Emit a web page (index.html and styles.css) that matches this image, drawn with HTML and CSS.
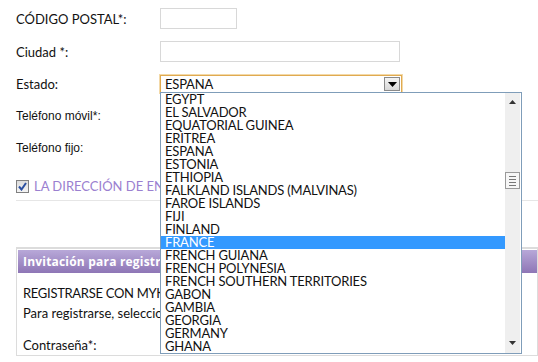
FILE: index.html
```html
<!DOCTYPE html>
<html lang="es">
<head>
    <meta charset="UTF-8">
    <title>Dirección</title>
    <link rel="stylesheet" href="styles.css">
</head>
<body>
    <div class="page">
        <div class="form-row row-tall">
            <label>CÓDIGO POSTAL*:</label>
            <div class="field field-short"></div>
        </div>
        <div class="form-row row-tall">
            <label>Ciudad *:</label>
            <div class="field field-long"></div>
        </div>
        <div class="form-row">
            <label>Estado:</label>
            <div class="select-wrap">
                <div class="select">
                    <span>ESPANA</span>
                    <span class="select-btn">
                        <svg width="9" height="5" viewBox="0 0 9 5"><path d="M0 0H9L4.5 5Z" fill="#000"/></svg>
                    </span>
                </div>
                <ul class="dropdown">
                    <li>EGYPT</li>
                    <li>EL SALVADOR</li>
                    <li>EQUATORIAL GUINEA</li>
                    <li>ERITREA</li>
                    <li>ESPANA</li>
                    <li>ESTONIA</li>
                    <li>ETHIOPIA</li>
                    <li>FALKLAND ISLANDS (MALVINAS)</li>
                    <li>FAROE ISLANDS</li>
                    <li>FIJI</li>
                    <li>FINLAND</li>
                    <li class="selected">FRANCE</li>
                    <li>FRENCH GUIANA</li>
                    <li>FRENCH POLYNESIA</li>
                    <li>FRENCH SOUTHERN TERRITORIES</li>
                    <li>GABON</li>
                    <li>GAMBIA</li>
                    <li>GEORGIA</li>
                    <li>GERMANY</li>
                    <li>GHANA</li>
                </ul>
                <div class="scrollbar">
                    <svg class="arrow-up" width="7" height="4" viewBox="0 0 7 4"><path d="M3.5 0L7 4H0Z" fill="#333"/></svg>
                    <div class="thumb"><i></i><i></i><i></i><i></i></div>
                    <svg class="arrow-down" width="7" height="4" viewBox="0 0 7 4"><path d="M0 0H7L3.5 4Z" fill="#333"/></svg>
                </div>
            </div>
        </div>
        <div class="form-row">
            <label class="plain">Teléfono móvil*:</label>
        </div>
        <div class="form-row">
            <label class="plain">Teléfono fijo:</label>
        </div>

        <div class="check-row">
            <span class="checkbox">
                <svg width="9" height="9" viewBox="0 0 9 9"><path d="M1 4.5L3.5 7.5L8 1" stroke="#2a4fa0" stroke-width="2" fill="none"/></svg>
            </span>
            <span class="check-label">LA DIRECCIÓN DE ENVÍO ES LA MISMA</span>
        </div>
        <hr class="divider">

        <div class="box">
            <div class="box-header">Invitación para registrarse en MyKiko</div>
            <p class="box-line first">REGISTRARSE CON MYKIKO</p>
            <p class="box-line">Para registrarse, seleccione una contraseña</p>
            <p class="box-line pass">Contraseña*:</p>
        </div>
    </div>
</body>
</html>
```

FILE: styles.css
```css
body {
    margin: 0;
    background: #ffffff;
    font-family: Lato, "Open Sans", sans-serif;
    font-size: 13px;
    color: #111;
    overflow: hidden;
}
.page {
    padding: 2px 0 0 16px;
}
.form-row {
    display: flex;
    align-items: center;
    height: 32px;
}
.form-row.row-tall {
    height: 33px;
}
.form-row label {
    width: 144px;
    flex-shrink: 0;
}
.form-row label.plain {
    font-family: "Liberation Sans", Arial, sans-serif;
    font-size: 12px;
}
.field {
    height: 19px;
    border: 1px solid #d8d8d8;
    background: #fff;
}
.field-short {
    width: 75px;
}
.field-long {
    width: 238px;
}
.select-wrap {
    position: relative;
}
.select {
    width: 235px;
    height: 16px;
    border: 1px solid #e0aa50;
    box-shadow: 0 0 0 1px #f3d9a8;
    display: flex;
    align-items: center;
    justify-content: space-between;
    padding: 0 1px 0 4px;
    line-height: 16px;
    letter-spacing: -0.2px;
}
.select-btn {
    width: 14px;
    height: 12px;
    border: 1px solid #8a8a8a;
    background: linear-gradient(#f4f4f4, #d8d8d8);
    display: flex;
    align-items: center;
    justify-content: center;
}
.dropdown {
    position: absolute;
    left: 0;
    top: 17px;
    width: 360px;
    margin: 0;
    padding: 0;
    list-style: none;
    background: #fff;
    border: 1px solid #7f9db9;
    z-index: 2;
}
.dropdown li {
    height: 13px;
    line-height: 13px;
    padding-left: 4px;
    margin-right: 16px;
    white-space: nowrap;
    letter-spacing: -0.2px;
}
.dropdown li.selected {
    background: #3399ff;
    color: #fff;
}
.scrollbar {
    position: absolute;
    top: 18px;
    left: 345px;
    width: 15px;
    height: 260px;
    background: #efefef;
    z-index: 3;
}
.arrow-up {
    position: absolute;
    top: 7px;
    left: 4px;
}
.arrow-down {
    position: absolute;
    bottom: 8px;
    left: 4px;
}
.thumb {
    position: absolute;
    top: 79px;
    left: 0;
    width: 13px;
    height: 15px;
    border: 1px solid #999;
    background: #f6f6f6;
    display: flex;
    flex-direction: column;
    align-items: center;
    justify-content: center;
    gap: 2px;
}
.thumb i {
    display: block;
    width: 7px;
    height: 1px;
    background: #777;
}
.check-row {
    display: flex;
    align-items: center;
    gap: 5px;
    margin-top: 12px;
    height: 20px;
    white-space: nowrap;
}
.checkbox {
    width: 11px;
    height: 11px;
    border: 1px solid #808080;
    background: linear-gradient(#dcdcdc, #f4f4f4);
    display: flex;
    align-items: center;
    justify-content: center;
}
.check-label {
    color: #9b80d0;
}
.divider {
    border: none;
    border-top: 1px solid #e6e6e6;
    margin: 4px 0 0 0;
}
.box {
    margin-top: 46px;
    border: 1px solid #dcdcdc;
    border-top-width: 2px;
    padding: 1px 0 0 1px;
}
.box-header {
    height: 23px;
    line-height: 23px;
    padding-left: 5px;
    background: linear-gradient(#b8a8d8, #8e76b6);
    color: #fff;
    font-family: "Open Sans", sans-serif;
    font-weight: bold;
    font-size: 12px;
    letter-spacing: 0.2px;
    white-space: nowrap;
}
.box-line {
    margin: 0;
    padding-left: 5px;
    height: 20px;
    line-height: 20px;
    white-space: nowrap;
}
.box-line.first {
    margin-top: 10px;
    letter-spacing: -0.3px;
}
.box-line.pass {
    margin-top: 12px;
}
```
